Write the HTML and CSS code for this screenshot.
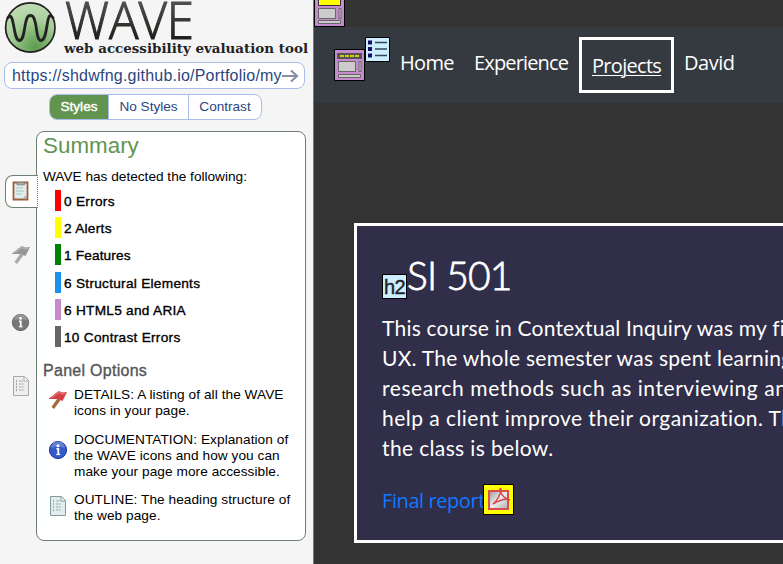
FILE: index.html
```html
<!DOCTYPE html>
<html lang="en">
<head>
<meta charset="utf-8">
<title>WAVE report</title>
<link rel="stylesheet" href="styles.css">
</head>
<body>
<svg class="defs" width="0" height="0" aria-hidden="true">
  <defs>
    <symbol id="flag" viewBox="0 0 20 20"><path d="M9 9 3.500 17l2.500 2L13 9.500z" fill="var(--pole)"/><path d="M.500 9 8 3l3-2 3 1.500 5-.5-4.500 9-3.500-1.500-3-.5z" fill="var(--flag)"/><path d="m4 7.500 7-5 3 1.500 3-.7" fill="none" stroke="var(--shine)"/></symbol>
    <symbol id="info" viewBox="0 0 20 20"><circle cx="10" cy="10" r="8.600" fill="var(--disc)" stroke="var(--rim)" stroke-width="1"/><path d="M3 8a7 7 0 0 1 14 0q-7-3-14 0" fill="#fff" opacity=".22"/><circle cx="10" cy="5.700" r="1.500" fill="#fff"/><path d="M8.500 8.800h1.800v5.500" fill="none" stroke="#fff" stroke-width="1.800"/><path d="M8.300 14.500h4" stroke="#fff" stroke-width="1.200"/></symbol>
    <symbol id="page" viewBox="0 0 20 22"><path d="M2.500 1.500h11l4 4v15h-15z" fill="var(--paper)" stroke="var(--line)"/><path d="M13 2v4h4" fill="#fff" stroke="var(--line)"/><path d="M8 6h4M8 9h5M8 12h5M8 15h5" stroke="var(--text)" stroke-dasharray="2 .6"/><path d="M5 6h1M5 9h1M5 12h1M5 15h1" stroke="var(--dot)" stroke-width="1.300"/></symbol>
  </defs>
</svg>
<div class="app">
  <aside class="sidebar">
    <svg class="logo" width="313" height="61" viewBox="0 0 313 61">
      <defs>
        <radialGradient id="orb" cx=".6" cy=".9" r=".85"><stop offset="0" stop-color="#5d9b4b"/><stop offset=".65" stop-color="#a9cf9b"/><stop offset="1" stop-color="#bddbb1"/></radialGradient>
        <linearGradient id="ink" x1="0" y1="0" x2="0" y2="1"><stop offset=".2" stop-color="#555"/><stop offset=".8" stop-color="#1d1d19"/></linearGradient>
      </defs>
      <circle cx="30.300" cy="27" r="24.700" fill="url(#orb)" stroke="#222" stroke-width="1.700"/>
      <path d="M7.500 18C10 14 11.500 15 13 22 15 31 15.500 40 19.500 40S24 30 25.500 23 28 15 30.300 15 34 16 35.500 23 37 40 41 40 46 31 47.500 22 51 14 53.500 18" fill="none" stroke="#222" stroke-width="2.800"/>
      <text class="wordmark" x="65" y="38.500" textLength="129" lengthAdjust="spacingAndGlyphs" fill="url(#ink)" stroke="url(#ink)" stroke-width="1.100">WAVE</text>
      <text class="tagline" x="64" y="52.500" textLength="244" lengthAdjust="spacingAndGlyphs">web accessibility evaluation tool</text>
    </svg>
    <div class="address"><span class="url">https://shdwfng.github.io/Portfolio/my</span><svg width="17" height="14" viewBox="0 0 17 14"><path d="M0 7h14M9 1.500l6 5.500-6 5.500" fill="none" stroke="#8791a3" stroke-width="2.200"/></svg></div>
    <nav class="tabs"><span class="tab active">Styles</span><span class="tab second">No Styles</span><span class="tab third">Contrast</span></nav>
    <div class="workspace">
      <div class="rail">
        <div class="rail-tab"><svg width="20" height="22" viewBox="0 0 20 22"><path d="M2.500 2.500h14v17h-14z" fill="#e2eeee" stroke="#a05e3d" stroke-width="1.800"/><path d="M6 4V2.500h2.500a1.500 1.500 0 0 1 2.500 0h2.500V5H6z" fill="#aaa" stroke="#777" stroke-width=".6"/><path d="M5 8h7M5 11h8M5 14h6" stroke="#a7c3c2"/><path d="m11 19 4-4v4z" fill="#a8b8b8"/></svg></div>
        <svg class="gray flag" width="20" height="20"><use href="#flag"/></svg>
        <svg class="gray info" width="19" height="19"><use href="#info"/></svg>
        <svg class="gray page" width="20" height="22"><use href="#page"/></svg>
      </div>
      <section class="panel">
        <h2>Summary</h2>
        <p class="lead">WAVE has detected the following:</p>
        <ul class="counts">
          <li class="red">0 Errors</li><li class="yellow">2 Alerts</li><li class="green">1 Features</li><li class="blue">6 Structural Elements</li><li class="violet">6 HTML5 and ARIA</li><li class="dim">10 Contrast Errors</li>
        </ul>
        <h3>Panel Options</h3>
        <div class="option"><svg class="flag" width="20" height="20"><use href="#flag"/></svg><p>DETAILS: A listing of all the WAVE<br>icons in your page.</p></div>
        <div class="option tall"><svg class="info" width="20" height="20"><use href="#info"/></svg><p>DOCUMENTATION: Explanation of<br>the WAVE icons and how you can<br>make your page more accessible.</p></div>
        <div class="option"><svg class="page" width="20" height="22"><use href="#page"/></svg><p>OUTLINE: The heading structure of<br>the web page.</p></div>
      </section>
    </div>
  </aside>
  <main class="site">
    <header class="top">
      <svg width="31" height="27" viewBox="0 4 31 27"><path d="M.5.5h30v30H.5z" fill="#c68bcc" stroke="#000"/><path d="M4.500 3h22v6.500h-22z" fill="#ff0" stroke="#333"/><path d="M4.500 12.500h17v10h-17zM25 12.500h2v10h-2zM4.500 24.500h22v3h-22z" fill="#ccc" stroke="#666"/></svg>
    </header>
    <nav class="navbar">
      <svg class="nav-mark" width="31" height="32" viewBox="0 0 31 32"><path d="M.5.5h30v31H.5z" fill="#c68bcc" stroke="#000"/><path d="M3 4h25v6H3z" fill="#555"/><path d="M6 7h20" stroke="#cc0" stroke-width="2" stroke-dasharray="4 1"/><path d="M4.500 12.500h17v10h-17zM25 12.500h2v10h-2zM4.500 25.500h22v3h-22z" fill="#ccc" stroke="#666"/></svg>
      <svg class="list-mark" width="25" height="25" viewBox="0 0 25 25"><path d="M.5.5h24v24H.5z" fill="#cef" stroke="#000"/><path d="M3 3.500h4v4H3zM3 10h4v4H3zM3 16.500h4v4H3z" fill="#116"/><path d="M10 5.500h12M10 12h12M10 18.500h12" stroke="#345" stroke-width="1.500"/></svg>
      <span class="link home">Home</span><span class="link experience">Experience</span><span class="link projects"><u>Projects</u></span><span class="link david">David</span>
    </nav>
    <div class="content">
      <article class="card">
        <div class="title"><span class="badge">h2</span><h1>SI 501</h1></div>
        <div class="copy">
          <div class="l1">This course in Contextual Inquiry was my first</div>
          <div class="l2">UX. The whole semester was spent learning</div>
          <div class="l3">research methods such as interviewing and</div>
          <div class="l4">help a client improve their organization. The</div>
          <div class="l5">the class is below.</div>
        </div>
        <div class="report"><a>Final report</a><svg width="31" height="31" viewBox="0 0 31 31"><defs><linearGradient id="steel" x1="0" y1="0" x2="1" y2="1"><stop offset="0" stop-color="#999"/><stop offset=".5" stop-color="#eee"/><stop offset="1" stop-color="#aaa"/></linearGradient></defs><path d="M.5.5h30v30H.5z" fill="#ff0" stroke="#000"/><path d="M6 7h19v18H6z" fill="url(#steel)" stroke="#dd4a50" stroke-width="2"/><path d="M10 20c4-3 8-10 8-15-2-3-2 8 9 11-5-2-10 0-17 4z" fill="none" stroke="#d9434a" stroke-width="1.500"/></svg></div>
      </article>
    </div>
  </main>
</div>
</body>
</html>
```
FILE: styles.css
```css
* { box-sizing: border-box; }
body { margin: 0; width: 783px; height: 564px; overflow: hidden; font-family: "Liberation Sans", sans-serif; }
h1, h2, h3, p, ul { margin: 0; padding: 0; font-weight: 400; }
svg { display: block; flex-shrink: 0; }
.defs { position: absolute; }
.app { display: flex; height: 564px; overflow: hidden; }
.sidebar { width: 314px; flex: none; background: #f5f5f5; border-right: 1px solid #777; }
.logo { height: 62px; }
.wordmark { font: 300 52px "Open Sans", sans-serif; }
.tagline { font: bold 13px "DejaVu Serif", serif; fill: #222; }
.address { display: flex; align-items: center; width: 301px; height: 27px; margin-left: 4px; padding-left: 7px; border: 1px solid #a9bdeb; border-radius: 8px; background: #fff; color: #29467f; font-size: 16px; }
.url { width: 270px; overflow: hidden; white-space: nowrap; line-height: 24px; letter-spacing: .22px; }
.tabs { display: flex; width: 213px; height: 26px; margin: 5px 0 11px 49px; border: 1px solid #a9bdeb; border-radius: 8px; overflow: hidden; background: #fff; color: #29467f; font-size: 13.600px; line-height: 23px; text-align: center; }
.tab { width: 58px; }
.active { background: #61954f; color: #fff; -webkit-text-stroke: .4px; }
.second { width: 81px; border: solid #a9bdeb; border-width: 0 1px; }
.third { width: 72px; }
.workspace { display: flex; }
.rail { width: 36px; padding-top: 44px; }
.rail-tab { width: 33px; height: 33px; margin-left: 5px; padding: 4px 0 0 5px; border: 1px solid #708070; border-right: 1px dotted #777; border-radius: 8px 0 0 8px; background: #fff; position: relative; z-index: 1; }
.rail > svg { margin-left: 11px; }
.flag { --flag: #d63e46; --shine: #ee8581; --pole: #a66a3c; }
.info { --disc: #345bc7; --rim: #1b399b; }
.page { --paper: #e1ecec; --line: #829999; --text: #9aaeb1; --dot: #68aa8a; }
.gray.flag { --flag: #969696; --shine: #bbb; --pole: #aaa; margin-top: 37px; }
.gray.info { --disc: #777; --rim: #666; margin-top: 48px; }
.gray.page { --paper: #eee; --line: #aaa; --text: #aaa; --dot: #888; margin-top: 43px; }
.panel { width: 270px; height: 410px; border: 1px solid #708070; border-radius: 8px; background: #fff; padding: 0 0 0 6px; font-size: 13.650px; }
.panel h2 { height: 36px; color: #61954f; font-size: 22.400px; line-height: 27px; }
.lead { line-height: 17px; height: 22px; }
.counts { list-style: none; }
.counts li { margin: 0 0 6.200px 12px; border-left: 6px solid; padding-left: 3px; height: 21px; line-height: 23px; letter-spacing: .28px; -webkit-text-stroke: .35px #000; }
.counts .red { border-color: red; }
.counts .yellow { border-color: #ff0; }
.counts .green { border-color: #008000; letter-spacing: .15px; }
.counts .blue { border-color: #1c90ee; }
.counts .violet { border-color: #c68bcc; }
.counts .dim { border-color: #666; }
.panel h3 { color: #555; font-size: 16px; line-height: 22px; margin: 12.600px 0 5px; letter-spacing: .28px; -webkit-text-stroke: .35px; }
.option { display: flex; gap: 6px; padding-left: 5px; margin-bottom: 13px; line-height: 16px; white-space: nowrap; letter-spacing: .06px; }
.option svg { margin-top: 3px; }
.tall svg { margin-top: 8px; }
.tall { margin-bottom: 12px; }
.site { flex: 1; overflow: hidden; background: #333; color: #fff; }
.top { height: 27px; }
.navbar { display: flex; align-items: flex-start; height: 76px; padding-left: 20px; background: #343a40; font: 20px/30px "Open Sans", sans-serif; }
.nav-mark { margin-top: 22px; }
.list-mark { margin-top: 10px; }
.link { margin-top: 21px; white-space: nowrap; }
.home { width: 74px; margin-left: 10px; letter-spacing: -.7px; }
.experience { width: 105px; letter-spacing: -.85px; }
.projects { width: 95px; height: 56px; margin-top: 10px; padding: 11px 0 0 10px; border: 3px solid #fff; letter-spacing: -.7px; }
.projects u { text-decoration-thickness: 1px; text-underline-offset: 2px; }
.david { margin-left: 10px; letter-spacing: -.45px; }
.content { padding: 120px 0 0 40px; }
.card { width: 800px; height: 320px; border: 3px solid #fff; background: #302e48; padding: 26px 25px; }
.title { display: flex; }
.title h1 { height: 61px; font: 39px/47px Lato, sans-serif; font-weight: 300; letter-spacing: -.8px; -webkit-text-stroke: .8px; }
.badge { width: 25px; height: 25px; margin-top: 22px; background: #cef; border: 1px solid #000; color: #222; font-size: 20px; line-height: 24px; text-align: center; letter-spacing: -.5px; -webkit-text-stroke: .4px; }
.copy { font: 21px/30px Lato, sans-serif; white-space: nowrap; }
.l1 { letter-spacing: .22px; }
.l2 { letter-spacing: .26px; }
.l3 { letter-spacing: .56px; }
.l4 { letter-spacing: .46px; }
.l5 { letter-spacing: .36px; }
.report { display: flex; align-items: center; margin-top: 20px; color: #0d7bff; font: 20px/30px "Open Sans", sans-serif; letter-spacing: -.42px; }
.report a { width: 101px; padding-top: 3px; white-space: nowrap; }
```
